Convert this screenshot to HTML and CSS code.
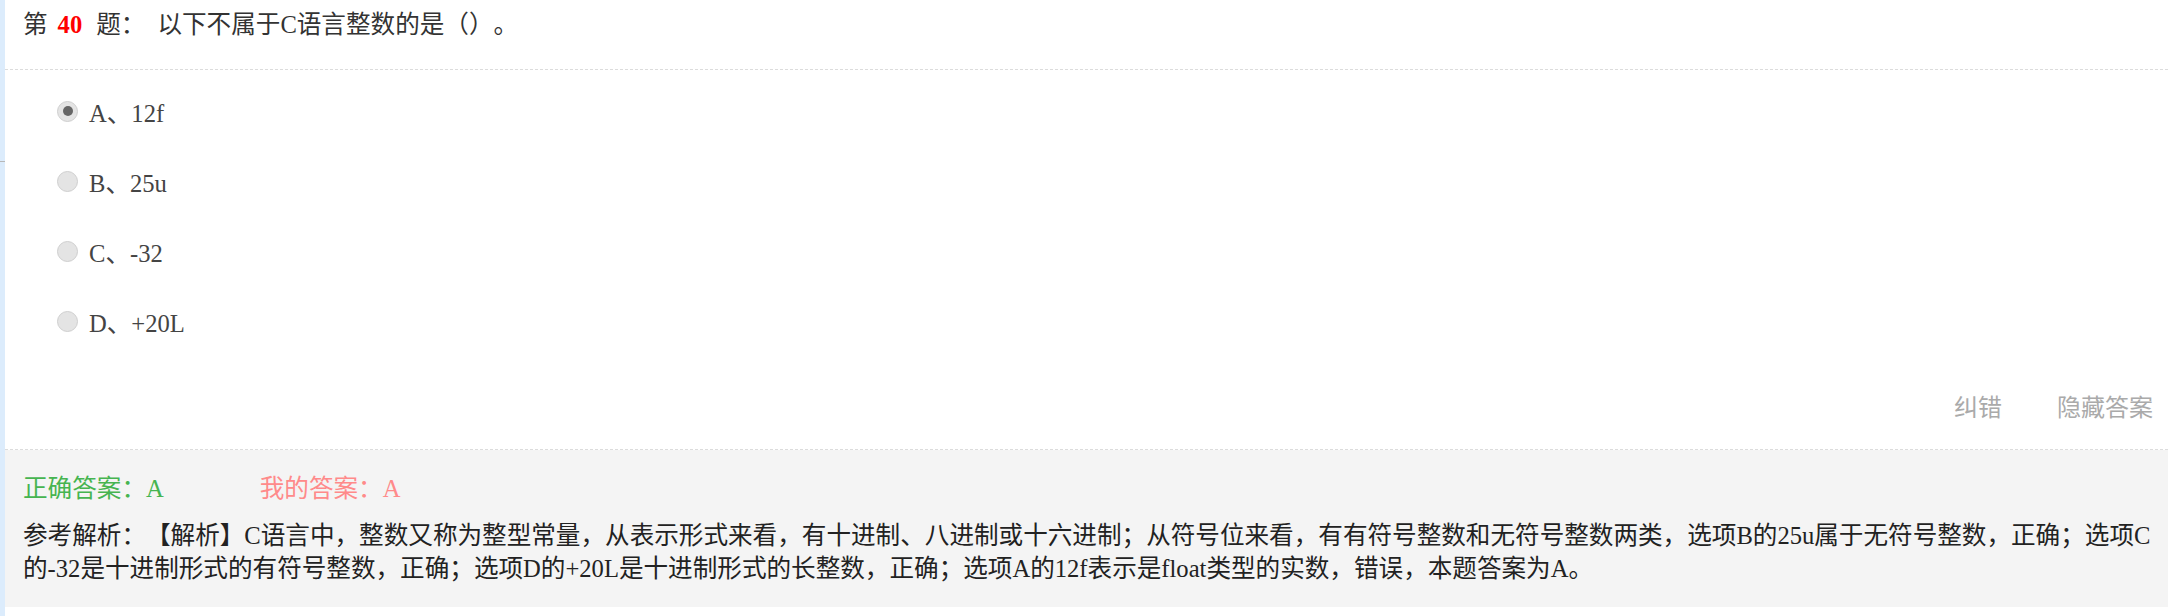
FILE: index.html
```html
<!DOCTYPE html>
<html lang="zh-CN">
<head>
  <meta charset="UTF-8">
  <title>第40题</title>
  <link rel="stylesheet" href="styles.css">
</head>
<body>
  <div class="page">
    <div class="side-strip"><span class="side-tick"></span></div>

    <div class="question">
      <div class="q-title">第<span class="q-num">40</span>题：<span class="q-stem">以下不属于C语言整数的是（）。</span></div>

      <ul class="options">
        <li class="option"><span class="radio checked"></span>A、12f</li>
        <li class="option"><span class="radio"></span>B、25u</li>
        <li class="option"><span class="radio"></span>C、-32</li>
        <li class="option"><span class="radio"></span>D、+20L</li>
      </ul>

      <div class="q-actions">
        <a class="action">纠错</a>
        <a class="action">隐藏答案</a>
      </div>

      <div class="answer-box">
        <div class="answer-row">
          <span class="right-answer">正确答案：A</span>
          <span class="my-answer">我的答案：A</span>
        </div>
        <p class="analysis">参考解析：【解析】C语言中，整数又称为整型常量，从表示形式来看，有十进制、八进制或十六进制；从符号位来看，有有符号整数和无符号整数两类，选项B的25u属于无符号整数，正确；选项C的-32是十进制形式的有符号整数，正确；选项D的+20L是十进制形式的长整数，正确；选项A的12f表示是float类型的实数，错误，本题答案为A。</p>
      </div>
    </div>
  </div>
</body>
</html>
```

FILE: styles.css
```css
* {
  margin: 0;
  padding: 0;
  box-sizing: border-box;
}

body {
  font-family: "Liberation Serif", "Noto Sans CJK SC", serif;
  font-size: 24.6px;
  color: #333;
  background: #fff;
  text-spacing-trim: space-all;
}

.page {
  display: flex;
  min-height: 616px;
}

.side-strip {
  width: 5px;
  flex-shrink: 0;
  background: #dcecfc;
  padding-top: 161px;
}

.side-tick {
  display: block;
  height: 1px;
  background: #b8b8b8;
}

.question {
  flex: 1;
}

.q-title {
  line-height: 36px;
  padding: 7px 15px 26px 18px;
  border-bottom: 1px dashed #dcdcdc;
}

.q-num {
  color: #f00;
  font-weight: bold;
  margin: 0 14px 0 10px;
}

.q-stem {
  margin-left: 12px;
}

.options {
  list-style: none;
  padding: 6px 0 0 52px;
}

.option {
  display: flex;
  align-items: center;
  gap: 11px;
  height: 70px;
  color: #444;
}

.radio {
  width: 21px;
  height: 21px;
  border-radius: 50%;
  background: #e4e4e4;
  border: 1px solid #cfcfcf;
  display: flex;
  align-items: center;
  justify-content: center;
}

.radio.checked::after {
  content: "";
  width: 10px;
  height: 10px;
  border-radius: 50%;
  background: #666;
}

.q-actions {
  display: flex;
  justify-content: flex-end;
  gap: 55px;
  margin-top: 34px;
  padding: 0 15px 23px 0;
  font-size: 24px;
  line-height: 36px;
  border-bottom: 1px dashed #dcdcdc;
}

.action {
  color: #aaa;
  cursor: pointer;
}

.answer-box {
  background: #f4f4f4;
  padding: 22px 8px 22px 18px;
}

.answer-row {
  display: flex;
  gap: 96px;
  line-height: 34px;
}

.right-answer {
  color: #46b450;
}

.my-answer {
  color: #ff8a8a;
}

.analysis {
  margin-top: 13px;
  line-height: 33px;
  color: #222;
}
```
